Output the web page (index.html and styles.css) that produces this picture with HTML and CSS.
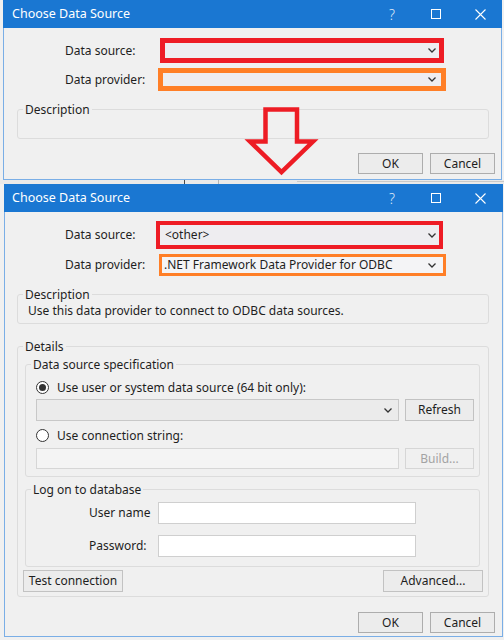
FILE: index.html
```html
<!DOCTYPE html>
<html lang="en">
<head>
<meta charset="utf-8">
<title>Choose Data Source</title>
<link rel="stylesheet" href="styles.css">
</head>
<body>
<div class="screen">

  <section class="window win1">
    <header class="titlebar">
      <span class="title">Choose Data Source</span>
      <span class="tb-btn help">?</span>
      <span class="tb-btn"><svg width="10" height="10" viewBox="0 0 10 10"><rect x="0.5" y="0.5" width="9" height="9" fill="none" stroke="#fff" stroke-width="1"/></svg></span>
      <span class="tb-btn"><svg width="11" height="11" viewBox="0 0 11 11"><path d="M0.5 0.5 L10.5 10.5 M10.5 0.5 L0.5 10.5" stroke="#fff" stroke-width="1.1" fill="none"/></svg></span>
    </header>
    <div class="body">
      <div class="field">
        <label class="lbl w95">Data source:</label>
        <div class="combo red1"><span class="combo-text"></span><svg class="chev" width="8" height="5" viewBox="0 0 8 5"><path d="M0.5 0.5 L4 4 L7.5 0.5" fill="none" stroke="#333" stroke-width="1.3"/></svg></div>
      </div>
      <div class="field gap5">
        <label class="lbl w93">Data provider:</label>
        <div class="combo orange1"><span class="combo-text"></span><svg class="chev" width="8" height="5" viewBox="0 0 8 5"><path d="M0.5 0.5 L4 4 L7.5 0.5" fill="none" stroke="#333" stroke-width="1.3"/></svg></div>
      </div>
      <div class="group desc desc-empty">
        <span class="group-title">Description</span>
      </div>
      <div class="actions a1">
        <button class="btn dlg">OK</button>
        <button class="btn dlg">Cancel</button>
      </div>
    </div>
  </section>

  <div class="gap-strip"></div>

  <section class="window win2">
    <header class="titlebar t2">
      <span class="title">Choose Data Source</span>
      <span class="tb-btn help">?</span>
      <span class="tb-btn"><svg width="10" height="10" viewBox="0 0 10 10"><rect x="0.5" y="0.5" width="9" height="9" fill="none" stroke="#fff" stroke-width="1"/></svg></span>
      <span class="tb-btn"><svg width="11" height="11" viewBox="0 0 11 11"><path d="M0.5 0.5 L10.5 10.5 M10.5 0.5 L0.5 10.5" stroke="#fff" stroke-width="1.1" fill="none"/></svg></span>
    </header>
    <div class="body b2">
      <div class="field">
        <label class="lbl w91">Data source:</label>
        <div class="combo red2"><span class="combo-text">&lt;other&gt;</span><svg class="chev" width="8" height="5" viewBox="0 0 8 5"><path d="M0.5 0.5 L4 4 L7.5 0.5" fill="none" stroke="#333" stroke-width="1.3"/></svg></div>
      </div>
      <div class="field gap5">
        <label class="lbl w94">Data provider:</label>
        <div class="combo orange2"><span class="combo-text">.NET Framework Data Provider for ODBC</span><svg class="chev" width="8" height="5" viewBox="0 0 8 5"><path d="M0.5 0.5 L4 4 L7.5 0.5" fill="none" stroke="#333" stroke-width="1.3"/></svg></div>
      </div>

      <div class="group desc">
        <span class="group-title">Description</span>
        <p class="desc-text">Use this data provider to connect to ODBC data sources.</p>
      </div>

      <div class="group details">
        <span class="group-title">Details</span>

        <div class="group spec">
          <span class="group-title">Data source specification</span>
          <div class="radio-row first">
            <span class="radio checked"></span>
            <span>Use user or system data source (64 bit only):</span>
          </div>
          <div class="ctl-row r-combo">
            <div class="combo dsn"><span class="combo-text"></span><svg class="chev" width="8" height="5" viewBox="0 0 8 5"><path d="M0.5 0.5 L4 4 L7.5 0.5" fill="none" stroke="#333" stroke-width="1.3"/></svg></div>
            <button class="btn side">Refresh</button>
          </div>
          <div class="radio-row second">
            <span class="radio"></span>
            <span>Use connection string:</span>
          </div>
          <div class="ctl-row r-conn">
            <div class="textbox disabled"></div>
            <button class="btn side off">Build...</button>
          </div>
        </div>

        <div class="group logon">
          <span class="group-title">Log on to database</span>
          <div class="login-row first">
            <label class="login-lbl">User name</label>
            <div class="textbox white"></div>
          </div>
          <div class="login-row second">
            <label class="login-lbl">Password:</label>
            <div class="textbox white"></div>
          </div>
        </div>

        <div class="detail-actions">
          <button class="btn wide">Test connection</button>
          <button class="btn wide">Advanced...</button>
        </div>
      </div>

      <div class="actions a2">
        <button class="btn dlg">OK</button>
        <button class="btn dlg">Cancel</button>
      </div>
    </div>
  </section>

  <svg class="arrow" width="76" height="76" viewBox="244 104 76 76">
    <path d="M265.5 109.5 L297 109.5 L297 141.5 L313 141.5 L281.5 172 L250 141.5 L265.5 141.5 Z" fill="none" stroke="#ed1c24" stroke-width="4.5" stroke-linejoin="miter"/>
  </svg>
</div>
</body>
</html>
```

FILE: styles.css
```css
* { box-sizing: border-box; }
html, body { margin: 0; padding: 0; }
body {
  width: 504px;
  height: 640px;
  overflow: hidden;
  background: #f0f0f0;
  font-family: "Noto Sans", "Open Sans", sans-serif;
  font-size: 12px;
  color: #1e1e1e;
}
.screen { position: relative; width: 504px; height: 640px; }

/* windows */
.window { width: 499px; }
.win1 { margin-left: 3px; }
.win2 { margin-left: 4px; }

.titlebar {
  height: 28px;
  background: #1a77d2;
  color: #fff;
  display: flex;
  align-items: center;
  padding-left: 9px;
}
.titlebar.t2 { padding-left: 8px; padding-right: 1px; }
.title { flex: 1; line-height: 16px; font-size: 12.5px; }
.tb-btn {
  width: 44px;
  height: 28px;
  display: flex;
  align-items: center;
  justify-content: center;
}
.tb-btn.help { font-size: 14px; font-weight: 300; color: #dfeaf7; }

.body {
  background: #f0f0f0;
  border: 1px solid #7aaee6;
  border-top: none;
  padding: 10px 0 5px 0;
}
.body.b2 { padding: 9px 0 3px 0; }

/* label + combo rows */
.field {
  display: flex;
  align-items: center;
  padding-left: 61px;
}
.b2 .field { padding-left: 60px; }
.field.gap5 { margin-top: 5px; }
.lbl { line-height: 16px; }
.w95 { width: 95px; }
.w93 { width: 93px; }
.w91 { width: 91px; }
.w94 { width: 94px; }

.combo {
  display: flex;
  align-items: center;
  background: #eeedf0;
  border: 1px solid #c8c8c8;
}
.combo-text { flex: 1; white-space: nowrap; overflow: hidden; line-height: 16px; }
.chev { flex: none; }

.red1 { width: 284px; height: 25px; border: 5px solid #ee1c25; padding-right: 3px; }
.orange1 { width: 288px; height: 23px; border: 5px solid #ff7f27; padding-right: 5px; }
.red2 { width: 287px; height: 28px; border: 4px solid #ee1c25; padding: 0 3px 0 5px; }
.orange2 { width: 287px; height: 22px; border: 3px solid #ff7f27; padding: 0 7px 0 2px; background: #f4f4f6; }

/* group boxes */
.group {
  border: 1px solid #dcdcdc;
  border-radius: 3px;
}
.group-title {
  display: block;
  width: fit-content;
  margin-top: -8px;
  padding: 0 2px;
  background: #f0f0f0;
  line-height: 15px;
}
.desc { margin: 18px 12px 0 13px; padding: 0 10px 4px 10px; }
.b2 .desc { margin: 18px 13px 0 12px; }
.desc > .group-title { margin-left: -5px; }
.desc-empty { height: 30px; }
.desc-text { margin: 1px 0 0 0; line-height: 16px; }

.details { margin: 22px 13px 0 12px; padding: 0 5px 4px 5px; }
.details > .group-title { margin-left: 0; }
.spec { margin: 10px 3px 0 2px; padding: 0 5px 7px 10px; }
.spec > .group-title { margin-left: -5px; }
.logon { margin: 12px 3px 0 2px; padding: 0 5px 9px 63px; }
.logon > .group-title { margin-left: -58px; }

.radio-row { display: flex; align-items: center; height: 16px; }
.radio-row.first { margin-top: 7px; }
.radio-row.second { margin-top: 6px; }
.radio {
  width: 13px;
  height: 13px;
  border: 1px solid #333;
  border-radius: 50%;
  background: #fff;
  margin-right: 8px;
  display: flex;
  align-items: center;
  justify-content: center;
}
.radio.checked::after {
  content: "";
  width: 7px;
  height: 7px;
  border-radius: 50%;
  background: #333;
}

.ctl-row { display: flex; gap: 6px; }
.r-combo { margin-top: 4px; height: 22px; }
.r-conn { margin-top: 5px; height: 21px; }
.combo.dsn { width: 363px; height: 22px; background: #ebebeb; border-color: #c8c8c8; padding-right: 6px; }
.textbox { border: 1px solid #cfcfcf; }
.textbox.disabled { width: 363px; height: 21px; background: #f4f4f4; border-color: #d6d6d6; }
.textbox.white { width: 258px; height: 22px; background: #fff; }

.login-row { display: flex; align-items: center; }
.login-row.first { margin-top: 5px; }
.login-row.second { margin-top: 11px; }
.login-lbl { width: 69px; line-height: 16px; }

.btn {
  font: inherit;
  color: #1e1e1e;
  background: #ececec;
  border: 1px solid #c2c2c2;
  padding: 0;
  margin: 0;
  line-height: 16px;
}
.btn.side { width: 69px; }
.btn.off { color: #a3a3a3; background: #f0f0f0; border-color: #d6d6d6; }
.btn.dlg { width: 65px; height: 21px; border-color: #adadad; }
.btn.wide { width: 100px; height: 22px; }

.detail-actions { display: flex; justify-content: space-between; margin-top: 3px; }

.actions { display: flex; justify-content: flex-end; gap: 7px; }
.a1 { margin-top: 14px; padding-right: 6px; }
.a2 { margin-top: 15px; padding-right: 7px; }

.gap-strip {
  height: 4px;
  background:
    linear-gradient(to right, transparent 184px, #4a4a4a 184px, #4a4a4a 185px, transparent 185px),
    linear-gradient(to right, transparent 218px, #b4b4b4 218px, #b4b4b4 219px, transparent 219px),
    linear-gradient(to bottom, transparent 1px, #c9c9c9 1px, #c9c9c9 2px, transparent 2px) 297px 0 / 207px 4px no-repeat,
    #e9e9e9;
}

/* annotation arrow drawn over the screenshots */
.arrow { position: absolute; left: 244px; top: 104px; }
```
